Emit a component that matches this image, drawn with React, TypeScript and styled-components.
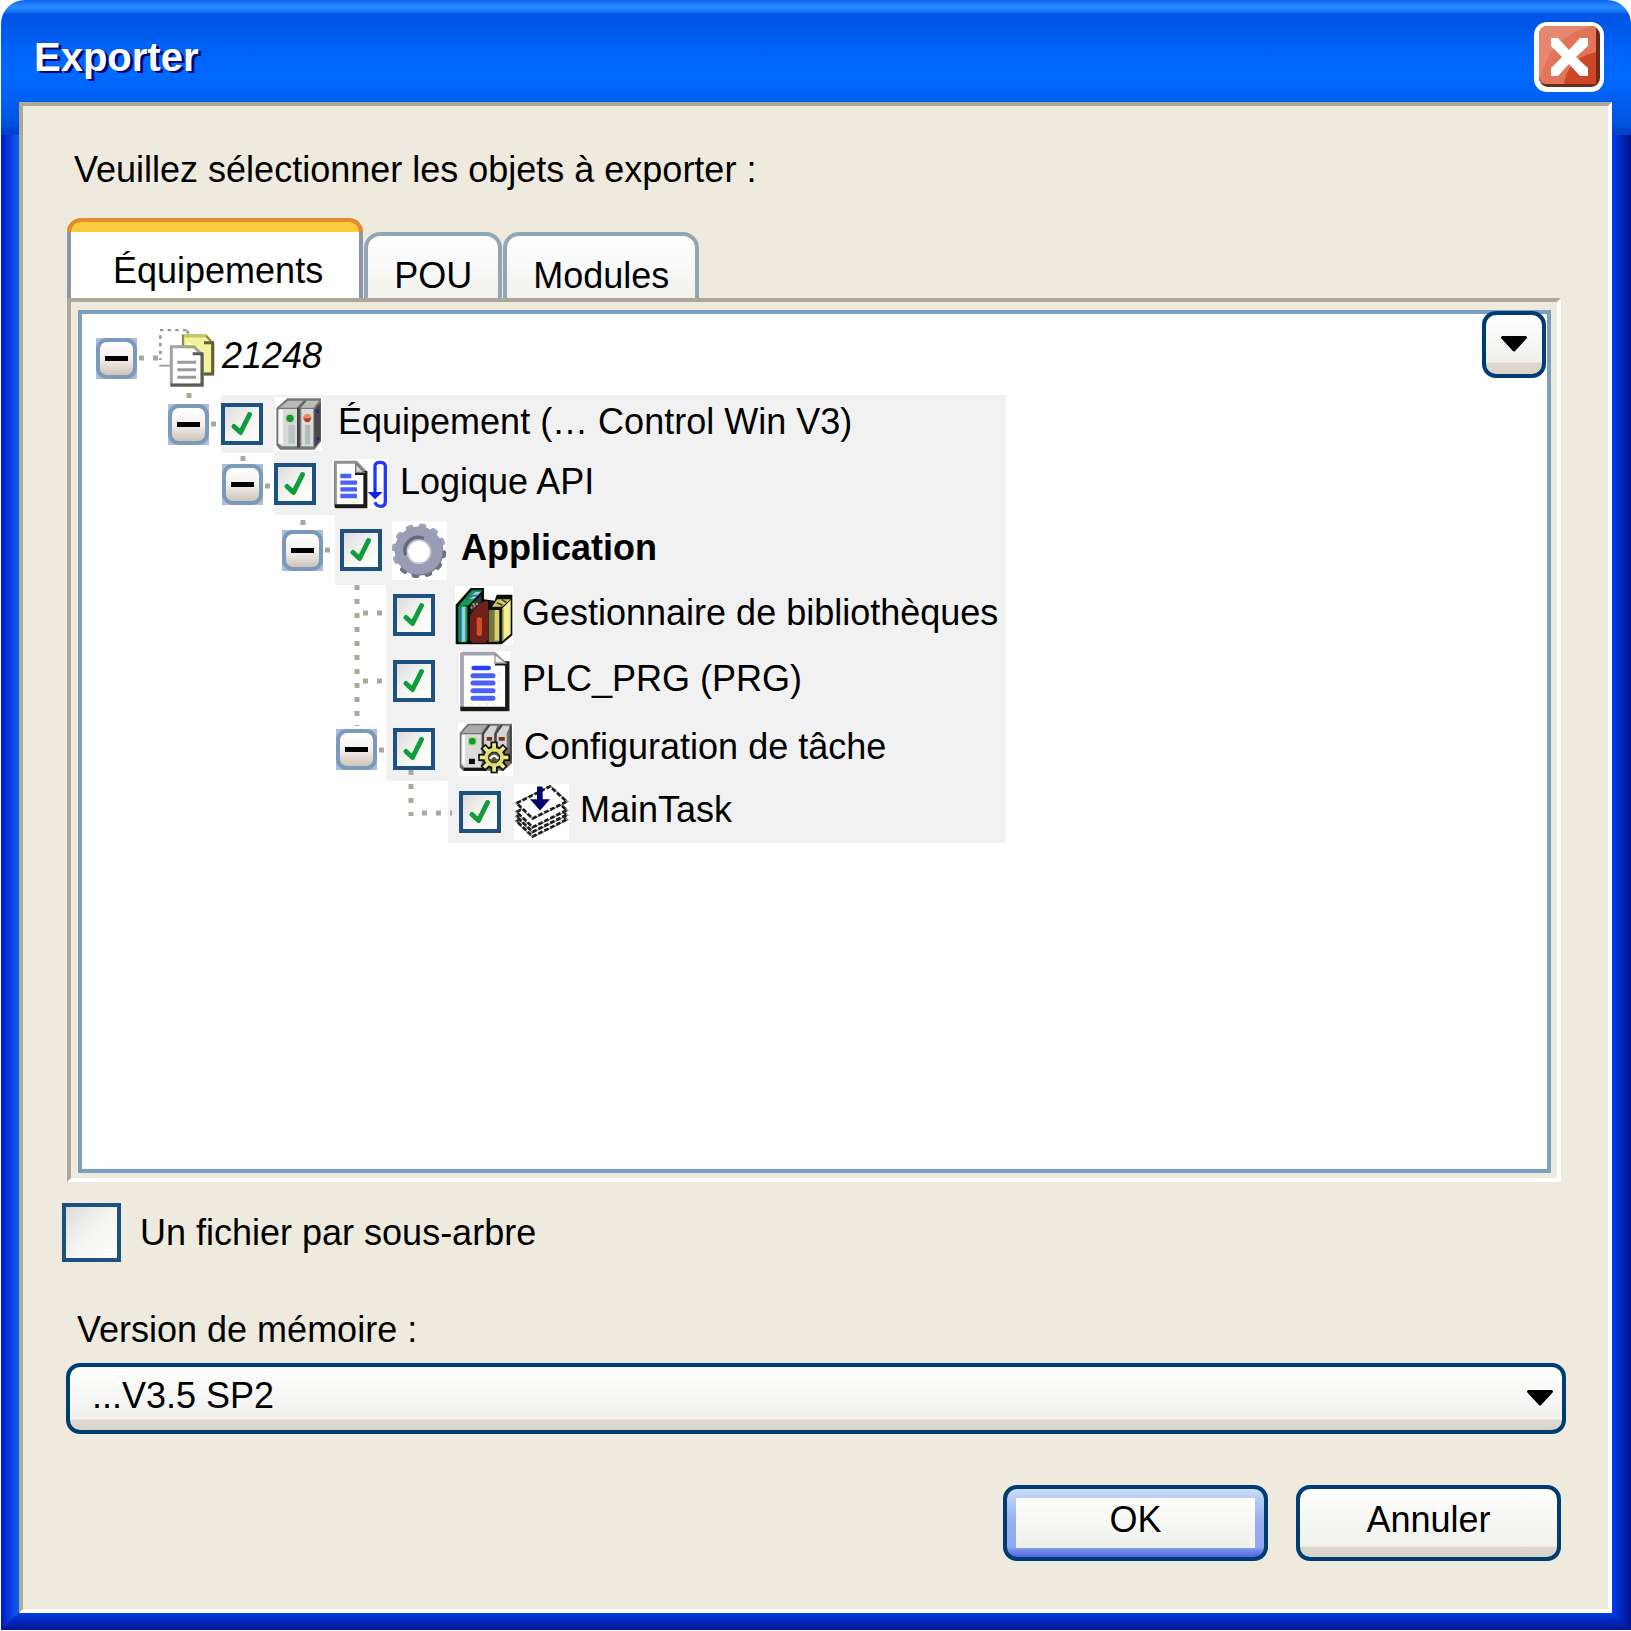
import React, { useState } from "react";
import styled, { createGlobalStyle, css } from "styled-components";

const GlobalStyle = createGlobalStyle`
  *, *::before, *::after { box-sizing: border-box; }
  body {
    margin: 0;
    background: #fff;
    color: #000;
    font-family: "Liberation Sans", Arial, sans-serif;
    font-size: 36px;
    line-height: 52px;
  }
  button, select, input { font: inherit; color: inherit; margin: 0; }
  svg { display: block; }
`;

const Page = styled.div`
  display: flex;
  min-height: 100vh;
  padding: 0 0 1px 1px;
`;

const Window = styled.main`
  position: relative;
  flex: 1;
  display: flex;
  flex-direction: column;
  padding: 0 19px 17px 18px;
  border-radius: 24px 24px 0 0;
  background:
    linear-gradient(
        #0a62f0 0,
        #2a8cff 7px,
        #1470f5 12px,
        #0054e3 14px,
        #0059ea 30px,
        #0064fb 55px,
        #0069ff 75px,
        #0062f5 95px,
        #0058e6 115px,
        #0050da 127px,
        #0046cf 128px,
        #0042c8 135px
      )
      top / 100% 135px no-repeat,
    linear-gradient(90deg, #0018c8, #0a4fe8 14px, #0f5cf0 18px) left / 18px 100% no-repeat,
    linear-gradient(90deg, #0040ea, #0028c0 9px, #001288 19px) right / 19px 100% no-repeat,
    #0030c8;

  &::after {
    content: "";
    position: absolute;
    left: 0;
    right: 0;
    bottom: 0;
    height: 18px;
    background: linear-gradient(#0042e8, #0028bc 9px, #001590);
    clip-path: polygon(18px 0, calc(100% - 19px) 0, 100% 100%, 0 100%);
  }
`;

const TitleBar = styled.header`
  display: flex;
  align-items: center;
  justify-content: space-between;
  height: 102px;
  padding: 12px 8px 0 15px;
`;

const Title = styled.h1`
  margin: 0;
  font-size: 40px;
  line-height: 60px;
  font-weight: 700;
  color: #fff;
  text-shadow: 3px 2px 0 #00086e;
`;

const CloseButton = styled.button`
  width: 70px;
  height: 70px;
  padding: 0;
  border: 0;
  background: none;
`;

const Client = styled.section`
  position: relative;
  z-index: 1;
  flex: 1;
  display: flex;
  flex-direction: column;
  padding: 38px 47px 48px 44px;
  border: 4px solid;
  border-color: #aca899 #fff #fff #aca899;
  background: #eeeade;
`;

const Prompt = styled.p`
  margin: 0 0 22px 7px;
`;

const Tabs = styled.div`
  display: flex;
  align-items: flex-end;
  gap: 1px;
  height: 80px;
`;

const Tab = styled.button<{ $active: boolean }>`
  display: flex;
  align-items: flex-end;
  justify-content: center;
  min-width: 137px;
  height: 66px;
  padding: 0 26px;
  border: 4px solid #91a7b7;
  border-bottom: 0;
  border-radius: 16px 16px 0 0;
  background: linear-gradient(#fff, #f9f9f9 30px, #f0f0ec);
  line-height: 44px;
  ${(p) =>
    p.$active &&
    css`
      position: relative;
      height: 80px;
      padding: 0 36px 5px 42px;
      border: 4px solid #8c96a4;
      border-width: 0 4px;
      background: #fff;
      &::before {
        content: "";
        position: absolute;
        inset: 0 -4px auto;
        height: 14px;
        border: 4px solid #e5892e;
        border-bottom: 0;
        border-radius: 14px 14px 0 0;
        background: #fecb3e;
      }
    `}
`;

const Panel = styled.div`
  flex: 1;
  display: flex;
  padding: 8px 6px 5px 7px;
  border: 4px solid;
  border-color: #aca899 #fff #fff #aca899;
`;

const ListBox = styled.div`
  position: relative;
  flex: 1;
  border: 4px solid #7b9fc0;
  background: #fff;
`;

const MenuButton = styled.button`
  position: absolute;
  top: -3px;
  right: 1px;
  display: grid;
  place-items: center;
  width: 64px;
  height: 67px;
  padding: 0 0 2px;
  border: 4px solid #003c74;
  border-radius: 14px;
  background: linear-gradient(#fff, #f0f1ee 47px, #ddd9cf 48px, #d8d4c8);
`;

const Tree = styled.ul`
  position: relative;
  width: 924px;
  margin: 0;
  padding: 0;
  list-style: none;
`;

const Lines = styled.svg`
  position: absolute;
  top: 0;
  left: 0;
  width: 400px;
  height: 529px;
  pointer-events: none;
`;

const Row = styled.li<{ $height: number; $root?: boolean }>`
  display: flex;
  height: ${(p) => p.$height}px;
  padding-top: ${(p) => (p.$root ? 7 : 0)}px;
`;

const Lead = styled.div<{ $width: number; $gap: number }>`
  flex: none;
  display: flex;
  align-items: center;
  justify-content: flex-end;
  width: ${(p) => p.$width}px;
  padding-right: ${(p) => p.$gap}px;
`;

const Body = styled.label<{ $indent: number; $plain?: boolean }>`
  flex: 1;
  display: flex;
  align-items: center;
  padding-left: ${(p) => p.$indent}px;
  background: ${(p) => (p.$plain ? "transparent" : "#f1f1f1")};
  white-space: nowrap;
`;

const IconSlot = styled.span<{ $before: number; $after: number }>`
  flex: none;
  margin: 0 ${(p) => p.$after}px 0 ${(p) => p.$before}px;
`;

const Name = styled.span<{ $weight?: number; $italic?: boolean }>`
  padding-bottom: 4px;
  font-weight: ${(p) => p.$weight ?? 400};
  font-style: ${(p) => (p.$italic ? "italic" : "normal")};
`;

const ExpanderBox = styled.button`
  width: 41px;
  height: 41px;
  padding: 0;
  border: 0;
  background: #abbdd9;
`;

const ExpanderFace = styled.span`
  display: grid;
  place-items: center;
  width: 41px;
  height: 41px;
  border: 4px solid #7b9abb;
  border-radius: 11px;
  background: linear-gradient(#fff, #f3f1ee 50%, #d0c4b8);
  &::before {
    content: "";
    width: 23px;
    height: 5px;
    background: #000;
  }
`;

const CheckWrap = styled.span<{ $size: number }>`
  flex: none;
  display: grid;
  width: ${(p) => p.$size}px;
  height: ${(p) => p.$size}px;
  > * {
    grid-area: 1 / 1;
    width: 100%;
    height: 100%;
  }
  svg {
    pointer-events: none;
  }
`;

const CheckInput = styled.input`
  appearance: none;
  border: 4px solid #1c5180;
  background: linear-gradient(135deg, #dcdcdf, #f4f4f1 50%, #fff);
`;

const OptionRow = styled.label`
  display: flex;
  align-items: center;
  align-self: flex-start;
  gap: 19px;
  margin: 21px 0 42px -5px;
`;

const FieldLabel = styled.label`
  margin: 0 0 7px 10px;
`;

const SelectWrap = styled.div`
  display: grid;
  align-items: center;
  margin: 0 -5px 51px -1px;
  > * {
    grid-area: 1 / 1;
  }
  svg {
    justify-self: end;
    margin: 0 12px 2px 0;
    pointer-events: none;
  }
`;

const Select = styled.select`
  appearance: none;
  width: 100%;
  height: 71px;
  padding: 0 60px 6px 22px;
  border: 4px solid #003c74;
  border-radius: 14px;
  background: linear-gradient(#fff, #f0f1ed 52px, #ddd9cf 53px, #d8d3c8);
`;

const Actions = styled.footer`
  display: flex;
  justify-content: flex-end;
  gap: 28px;
`;

const ActionButton = styled.button<{ $primary?: boolean }>`
  width: 265px;
  height: 76px;
  padding: 0 0 6px;
  border: 4px solid #003c74;
  border-radius: 14px;
  background: linear-gradient(#fff, #f0f1ed 57px, #ddd9cf 58px, #d8d3c8);
  ${(p) =>
    p.$primary &&
    css`
      background:
        linear-gradient(#fdfdfc, #f0f1ed) center 9px / calc(100% - 18px) 50px no-repeat,
        linear-gradient(#cfe0fb, #b5cdf6 9px, #96aeee 34px, #90a8ee 59px, #7b96e6 60px, #4f62e8);
    `}
`;

function Arrow() {
  return (
    <svg width="28" height="18" viewBox="0 0 28 18" aria-hidden="true">
      <path d="M2.500 2.500H25.500L14 15Z" fill="#000" stroke="#000" strokeWidth="3" strokeLinejoin="round" />
    </svg>
  );
}

function CloseIcon() {
  return (
    <svg width="70" height="70" viewBox="0 0 70 70" aria-hidden="true">
      <rect width="70" height="70" rx="13" fill="#fff" />
      <rect x="5" y="4" width="61" height="61" rx="9" fill="#6e2a1c" />
      <path d="M14 4H58Q62 4 62 8V62H12Q5 62 5 54V13Q5 4 14 4Z" fill="#e2745a" />
      <path d="M14 4H57Q15 15 7 56Q5 55 5 52V13Q5 4 14 4Z" fill="#e6886f" />
      <path d="M62 30V62H30Q33 37 62 30Z" fill="#cd4727" />
      <path d="M17 16H24L35 28L46 16H54V24L42 35L54 46V54H46L35 42L24 54H17V46L28 35L17 24Z" fill="#fff" />
    </svg>
  );
}

function Check() {
  return (
    <svg viewBox="0 0 42 42" aria-hidden="true">
      <path d="M13 23.500L19.500 29.500L28.500 11.500" fill="none" stroke="#0f9d3d" strokeWidth="5" strokeLinecap="round" strokeLinejoin="round" />
    </svg>
  );
}

function ProjectIcon() {
  return (
    <svg width="56" height="58" viewBox="237 57 168 174" aria-hidden="true">
      <path d="M240 60H322M241 76V150M320 62L330 76" fill="none" stroke="#999" strokeWidth="8" strokeDasharray="10 13" />
      <path d="M238 167H272" stroke="#a5a5a5" strokeWidth="6" />
      <path d="M309 77H378L399 100V192H340L309 160Z" fill="#f4f29a" stroke="#8b8d45" strokeWidth="7" />
      <path d="M312 78H378" stroke="#c5c85c" strokeWidth="9" />
      <path d="M320 96L350 108L335 120Z" fill="#fff" />
      <path d="M372 98H398V192H368" fill="none" stroke="#5f6038" strokeWidth="9" />
      <path d="M274 110H342L367 136V226H274Z" fill="#fff" stroke="#a2a2a2" strokeWidth="9" />
      <path d="M338 131H366V225H272" fill="none" stroke="#5b5b58" strokeWidth="9" />
      <path d="M318 111H346" stroke="#9db04e" strokeWidth="7" />
      <path d="M292 157H348M292 179H348M292 202H348" stroke="#9a9a9d" strokeWidth="9" />
    </svg>
  );
}

function DeviceIcon() {
  return (
    <svg width="47" height="54" viewBox="582 252 141 162" aria-hidden="true">
      <rect x="582" y="252" width="141" height="162" fill="#fff" />
      <path d="M588 286L620 258H718V384L700 408H598L588 396Z" fill="#777" stroke="#777" strokeWidth="4" />
      <path d="M594 284L622 263H668L648 284Z" fill="#b9b9b9" />
      <path d="M660 284L678 263H714L698 284Z" fill="#bdbdbd" />
      <path d="M594 288H648V400H602L594 392Z" fill="#dadada" />
      <path d="M592 290H606V392H592Z" fill="#f7f7f7" />
      <path d="M622 335H642V392H622Z" fill="#bdc3c3" />
      <path d="M661 288H697V400H661Z" fill="#dcdcdc" />
      <path d="M672 335H688V394H672Z" fill="#b3bcbc" />
      <path d="M700 290L719 268V382L700 404Z" fill="#4a4a4a" />
      <path d="M652 284V404" stroke="#444" strokeWidth="8" />
      <path d="M652 284L672 263" stroke="#666" strokeWidth="6" />
      <rect x="613" y="302" width="29" height="27" rx="6" fill="#c8d8a8" />
      <circle cx="627" cy="316" r="11" fill="#0c9a3a" />
      <circle cx="679" cy="315" r="13" fill="#e58a70" />
      <path d="M668 316H690L684 327H674Z" fill="#b03a20" />
      <path d="M710 290V300M711 372V382" stroke="#1a1a90" strokeWidth="5" />
    </svg>
  );
}

function LogicIcon() {
  return (
    <svg width="56" height="50" viewBox="757 444 168 150" aria-hidden="true">
      <rect x="757" y="444" width="168" height="150" fill="#fff" />
      <path d="M767 454H830L858 484V586H767Z" fill="#fff" stroke="#8e8e8e" strokeWidth="9" strokeLinejoin="round" />
      <path d="M826 486H857V586H766" fill="none" stroke="#1b1b1b" strokeWidth="12" />
      <path d="M828 458L854 484H828Z" fill="#ddd" stroke="#777" strokeWidth="4" />
      <path d="M782 495H815M782 515H832M782 535H832M782 555H832" stroke="#4b60f5" strokeWidth="13" />
      <path d="M786 573H836" stroke="#f6f3b8" strokeWidth="4" />
      <path d="M886 552V466Q886 454 901 454Q917 454 917 466V572Q917 586 902 586Q890 586 886 574" fill="none" stroke="#2438fa" strokeWidth="10" />
      <path d="M869 545H904L886 562ZM886 530V550" fill="#0c20ee" stroke="#0c20ee" strokeWidth="4" />
    </svg>
  );
}

function GearIcon() {
  const teeth = Array.from({ length: 12 }, (_, i) => i * 30 + 8);
  return (
    <svg width="55" height="59" viewBox="547 270 165 176" aria-hidden="true">
      <rect x="547" y="270" width="165" height="176" fill="#fff" />
      {teeth.map((a) => (
        <g key={a} transform={`rotate(${a} 628 359)`}>
          <rect x="616" y="277" width="24" height="30" rx="8" fill={a > 80 && a < 220 ? "#6f707f" : "#a3a4bb"} />
        </g>
      ))}
      <circle cx="630" cy="362" r="71" fill="#77788a" />
      <circle cx="627" cy="358" r="72" fill="#9a9bb4" />
      <path d="M588 372A40 40 0 0 1 642 322" fill="none" stroke="#666776" strokeWidth="10" />
      <circle cx="628" cy="362" r="33" fill="#fff" />
      <circle cx="628" cy="362" r="35" fill="none" stroke="#c9cad6" strokeWidth="4" />
    </svg>
  );
}

function LibraryIcon() {
  return (
    <svg width="58" height="59" viewBox="405 12 174 177" aria-hidden="true">
      <rect x="405" y="12" width="174" height="177" fill="#fff" />
      <path d="M407 68L452 18H492V52L524 56L530 38H577V160L545 187H407Z" fill="#0d0d0d" />
      <path d="M417 70L456 25H488L446 70Z" fill="#0f9b50" />
      <path d="M446 50L466 30H482L462 50Z" fill="#9fd3df" />
      <path d="M440 52L456 42L472 40" stroke="#1b6cb0" strokeWidth="5" fill="none" />
      <path d="M452 68L484 38V60L452 90Z" fill="#30343c" />
      <path d="M458 66H476M452 78L468 70" stroke="#999" strokeWidth="6" strokeDasharray="6 4" />
      <rect x="415" y="70" width="27" height="111" rx="8" fill="#0f9b50" />
      <rect x="423" y="75" width="13" height="104" fill="#9ad0dd" />
      <path d="M423 75V178" stroke="#0d68a8" strokeWidth="4" />
      <path d="M450 100Q480 52 504 58V172L496 182H456L450 174Z" fill="#6d2119" />
      <rect x="470" y="106" width="16" height="56" rx="8" fill="#d54c28" />
      <path d="M506 84H536V180H506Z" fill="#77733d" />
      <path d="M524 84H538V176H524Z" fill="#d9d06c" />
      <path d="M516 74L532 52H572L546 74Z" fill="#cfc862" />
      <path d="M530 62L548 70M545 52L560 62" stroke="#444226" strokeWidth="5" />
      <path d="M546 80L572 54V156L546 178Z" fill="#f5f293" />
      <path d="M548 80V176" stroke="#8a8540" strokeWidth="5" />
    </svg>
  );
}

function ProgramIcon() {
  return (
    <svg width="52" height="61" viewBox="416 206 156 183" aria-hidden="true">
      <rect x="416" y="206" width="156" height="183" fill="#fff" />
      <path d="M425 214H522L560 250V380H425Z" fill="#fff" stroke="#a3a3b2" strokeWidth="11" strokeLinejoin="round" />
      <path d="M524 243H561V380H420" fill="none" stroke="#191919" strokeWidth="13" />
      <path d="M524 216L556 242H524Z" fill="#eee" stroke="#9a9a9a" strokeWidth="4" />
      <path d="M460 257H505" stroke="#2a3df8" strokeWidth="14" strokeLinecap="round" />
      <path d="M458 280H518M458 302H518M458 325H518M458 348H518" stroke="#4b60f5" strokeWidth="15" strokeLinecap="round" />
      <path d="M535 270V358M450 365H530" stroke="#f4f2a8" strokeWidth="4" strokeDasharray="10 12" />
    </svg>
  );
}

function TaskConfigIcon() {
  const teeth = Array.from({ length: 8 }, (_, i) => i * 45);
  return (
    <svg width="55" height="53" viewBox="413 426 166 160" aria-hidden="true">
      <rect x="413" y="426" width="166" height="160" fill="#fff" />
      <path d="M418 456L442 428H576V548L550 570H428L418 560Z" fill="#707070" />
      <path d="M424 456L446 433H500L484 456Z" fill="#aaa" />
      <path d="M424 460H484V560H432L424 552Z" fill="#dcdcdc" />
      <path d="M424 462H434V550H424Z" fill="#fafafa" />
      <path d="M492 458L510 434H532L522 458V500H492ZM530 458L548 434H570L560 458V500H530Z" fill="#d4d4d4" />
      <path d="M488 460V500M488 460L508 432M526 460V490M526 460L545 432M572 434V545" fill="none" stroke="#444" strokeWidth="6" />
      <rect x="443" y="468" width="27" height="27" rx="6" fill="#b8d67a" />
      <circle cx="456" cy="481" r="10" fill="#0c9a3a" />
      <path d="M500 474H516M536 474H554" stroke="#7d2c1c" strokeWidth="11" />
      <path d="M446 534H464V550H446Z" fill="#0b0b0b" />
      <path d="M430 566H498" stroke="#111" strokeWidth="9" />
      {teeth.map((a) => (
        <path key={a} d="M522 482V528" transform={`rotate(${a} 522 530)`} stroke="#111" strokeWidth="22" />
      ))}
      <circle cx="522" cy="530" r="35" fill="#111" />
      {teeth.map((a) => (
        <path key={a} d="M522 487V512" transform={`rotate(${a} 522 530)`} stroke="#f0ec84" strokeWidth="11" />
      ))}
      <circle cx="522" cy="530" r="24" fill="none" stroke="#e2dc74" strokeWidth="11" />
      <circle cx="522" cy="530" r="16" fill="#55533a" />
      <path d="M510 534Q522 516 534 534" fill="none" stroke="#eee" strokeWidth="8" />
    </svg>
  );
}

function TaskIcon() {
  return (
    <svg width="55" height="56" viewBox="582 603 165 167" aria-hidden="true">
      <rect x="582" y="603" width="165" height="167" fill="#fff" />
      {[54, 40, 26, 0].map((dy) => (
        <g key={dy} fill="#fff" strokeWidth="8">
          <path d={`M590 ${660 + dy}L690 ${610 + dy}L740 ${655 + dy}L638 ${706 + dy}Z`} stroke="#8c8c8c" />
          <path d={`M590 ${660 + dy}L690 ${610 + dy}L740 ${655 + dy}L638 ${706 + dy}Z`} stroke="#1e1e1e" strokeDasharray="14 6" />
        </g>
      ))}
      <path d="M651 610H668V648H690L660 682L630 648H651Z" fill="#00006c" />
    </svg>
  );
}

type Node = {
  name: string;
  height: number;
  lead: number;
  gap: number;
  indent: number;
  before: number;
  after: number;
  icon: React.ReactNode;
  expandable?: boolean;
  bold?: boolean;
};

const nodes: Node[] = [
  { name: "Équipement (… Control Win V3)", height: 58, lead: 139, gap: 12, indent: 0, before: 12, after: 16, icon: <DeviceIcon />, expandable: true },
  { name: "Logique API", height: 62, lead: 192, gap: 11, indent: 0, before: 16, after: 12, icon: <LogicIcon />, expandable: true },
  { name: "Application", height: 70, lead: 253, gap: 12, indent: 5, before: 10, after: 14, icon: <GearIcon />, expandable: true, bold: true },
  { name: "Gestionnaire de bibliothèques", height: 60, lead: 304, gap: 9, indent: 7, before: 20, after: 9, icon: <LibraryIcon /> },
  { name: "PLC_PRG (PRG)", height: 72, lead: 304, gap: 9, indent: 7, before: 24, after: 11, icon: <ProgramIcon /> },
  { name: "Configuration de tâche", height: 64, lead: 304, gap: 9, indent: 7, before: 23, after: 11, icon: <TaskConfigIcon />, expandable: true },
  { name: "MainTask", height: 62, lead: 366, gap: 11, indent: 11, before: 13, after: 11, icon: <TaskIcon /> },
];

function Checkbox({ size, initial }: { size: number; initial: boolean }) {
  const [checked, setChecked] = useState(initial);
  return (
    <CheckWrap $size={size}>
      <CheckInput type="checkbox" checked={checked} onChange={(e) => setChecked(e.target.checked)} />
      {checked && <Check />}
    </CheckWrap>
  );
}

function Expander({ label }: { label: string }) {
  return (
    <ExpanderBox type="button" aria-label={`Réduire ${label}`}>
      <ExpanderFace />
    </ExpanderBox>
  );
}

function TreeLines() {
  const dots = { stroke: "#aca899", strokeWidth: 5, strokeDasharray: "5 9" };
  return (
    <Lines viewBox="0 0 400 529" aria-hidden="true">
      <path d="M57 44H76" {...dots} />
      <path d="M107 79V84M129 110H134M161 142V147M183 172H188M221 206V211M243 236H248" {...dots} />
      <path d="M275 271V412" {...dots} />
      <path d="M281 299H304M281 367H304M297 436H302" {...dots} />
      <path d="M329 456V502M340 499H370" {...dots} />
    </Lines>
  );
}

const tabs = ["Équipements", "POU", "Modules"];

export default function App() {
  const [active, setActive] = useState(tabs[0]);
  return (
    <>
      <GlobalStyle />
      <Page>
        <Window>
          <TitleBar>
            <Title>Exporter</Title>
            <CloseButton type="button" aria-label="Fermer">
              <CloseIcon />
            </CloseButton>
          </TitleBar>
          <Client>
            <Prompt>Veuillez sélectionner les objets à exporter :</Prompt>
            <Tabs role="tablist">
              {tabs.map((tab) => (
                <Tab key={tab} type="button" role="tab" aria-selected={tab === active} $active={tab === active} onClick={() => setActive(tab)}>
                  {tab}
                </Tab>
              ))}
            </Tabs>
            <Panel role="tabpanel">
              <ListBox>
                <Tree>
                  <Row $height={81} $root>
                    <Lead $width={77} $gap={22}>
                      <Expander label="21248" />
                    </Lead>
                    <Body as="div" $indent={0} $plain>
                      <IconSlot $before={0} $after={7}>
                        <ProjectIcon />
                      </IconSlot>
                      <Name $italic>21248</Name>
                    </Body>
                  </Row>
                  {nodes.map((n) => (
                    <Row key={n.name} $height={n.height}>
                      <Lead $width={n.lead} $gap={n.gap}>
                        {n.expandable && <Expander label={n.name} />}
                      </Lead>
                      <Body $indent={n.indent}>
                        <Checkbox size={42} initial />
                        <IconSlot $before={n.before} $after={n.after}>
                          {n.icon}
                        </IconSlot>
                        <Name $weight={n.bold ? 700 : 400}>{n.name}</Name>
                      </Body>
                    </Row>
                  ))}
                  <TreeLines />
                </Tree>
                <MenuButton type="button" aria-label="Options">
                  <Arrow />
                </MenuButton>
              </ListBox>
            </Panel>
            <OptionRow>
              <Checkbox size={59} initial={false} />
              Un fichier par sous-arbre
            </OptionRow>
            <FieldLabel htmlFor="version">Version de mémoire :</FieldLabel>
            <SelectWrap>
              <Select id="version" defaultValue="sp2">
                <option value="sp2">...V3.5 SP2</option>
              </Select>
              <Arrow />
            </SelectWrap>
            <Actions>
              <ActionButton type="button" $primary>
                OK
              </ActionButton>
              <ActionButton type="button">Annuler</ActionButton>
            </Actions>
          </Client>
        </Window>
      </Page>
    </>
  );
}
